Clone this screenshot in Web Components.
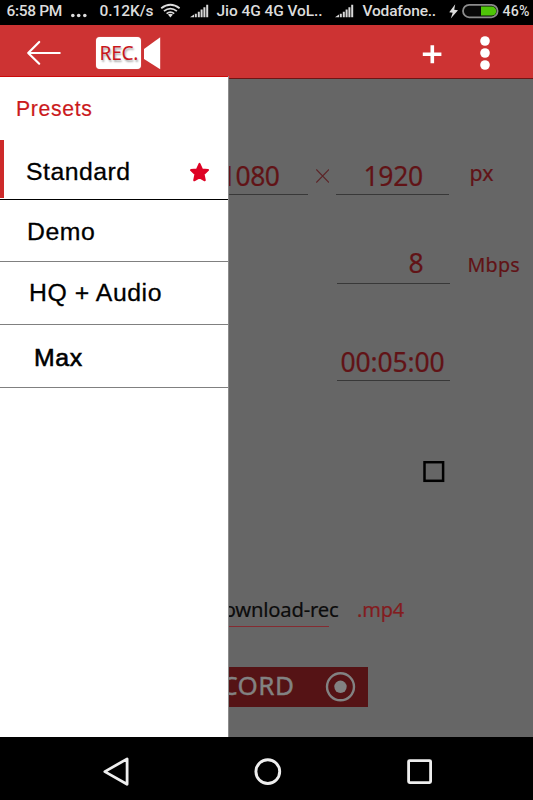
<!DOCTYPE html>
<html lang="en">
<head>
<meta charset="utf-8">
<title>Screen recorder</title>
<style>
  html, body { margin: 0; padding: 0; background: #000; }
</style>
</head>
<body>
<recorder-screen></recorder-screen>
<script>
const define = (name, html, setup) => {
  const template = document.createElement('template');
  template.innerHTML = html;
  customElements.define(name, class extends HTMLElement {
    connectedCallback() {
      if (this.shadowRoot) return;
      this.attachShadow({ mode: 'open' }).append(template.content.cloneNode(true));
      if (setup) setup.call(this, this.shadowRoot);
    }
  });
};

/* Single line of text tracked to an exact advance width. */
define('fit-text', `
  <style>
    :host { display: block; flex: none; white-space: nowrap; }
    span { display: inline-block; vertical-align: top; line-height: inherit; }
  </style><span></span>`, function (root) {
  const span = root.querySelector('span');
  span.textContent = this.getAttribute('text');
  const width = Number(this.getAttribute('w'));
  if (width) {
    this.style.width = width + 'px';
    const n = span.textContent.length;
    span.style.letterSpacing = (width - span.getBoundingClientRect().width) / n + 'px';
  }
});

define('signal-icon', `
  <style>:host { display: block; flex: none; width: 19px; height: 14px; } svg { display: block; }</style>
  <svg width="19" height="14" viewBox="0 0 19 14" fill="#d8d8d8">
    <path d="M0 13.2L4 10.6V13.2ZM4.8 9.8H6.8V13.2H4.8ZM7.8 7.8H9.8V13.2H7.8ZM10.6 5.6H12.6V13.2H10.6ZM13.4 3.2H15.4V13.2H13.4ZM16.2 .8H18.2V13.2H16.2Z"/>
  </svg>`);

define('status-bar', `
  <style>
    :host { display: grid; height: 25px; background: #000; color: #dcdcdc;
      grid-template-columns: 63.5px 29.5px 60.5px 29.5px 27px 118px 28px 86.5px 12.5px 41px 1fr;
      padding-left: 6.5px; box-sizing: border-box;
      font: 500 15.5px/23.5px Roboto, sans-serif; }
    svg { display: block; }
    signal-icon { margin-top: 4px; }
  </style>
  <fit-text text="6:58 PM" w="55.5"></fit-text>
  <svg width="20" height="24"><g fill="#dcdcdc"><circle cx="2.8" cy="15.5" r="1.8"/><circle cx="8.7" cy="15.5" r="1.8"/><circle cx="14.8" cy="15.5" r="1.8"/></g></svg>
  <fit-text text="0.12K/s" w="54"></fit-text>
  <svg width="21" height="24" viewBox="0 0 21 24" fill="none" stroke="#dcdcdc" stroke-width="1.8">
    <path d="M1.2 8.3Q10.4 1.2 19.6 8.3M3.9 11.1Q10.4 6.1 16.9 11.1M6.6 13.6Q10.4 10.6 14.2 13.6"/>
    <path d="M7.9 14.6Q10.4 12.7 12.9 14.6L10.4 17.6Z" fill="#dcdcdc" stroke="none"/>
  </svg>
  <signal-icon></signal-icon>
  <fit-text text="Jio 4G 4G VoL.." w="106"></fit-text>
  <signal-icon></signal-icon>
  <fit-text text="Vodafone.." w="73.5"></fit-text>
  <svg width="10" height="24" viewBox="0 0 10 24" fill="#dcdcdc"><path d="M6.2 4.3L.2 12.2L3.7 12.7L1.8 18.6L9 10.3L5.2 9.7Z"/></svg>
  <svg width="38" height="24" viewBox="0 0 38 24"><rect x="1" y="4.9" width="34.6" height="12.4" rx="6.2" fill="#080808" stroke="#8c8c8c" stroke-width="1.8"/>
    <path d="M19 6.6H29.8A4.5 4.5 0 0 1 29.8 15.6H19Z" fill="#4fc508"/></svg>
  <fit-text text="46%" w="27" style="font-size:14.2px"></fit-text>
`);

define('app-bar', `
  <style>
    :host { display: flex; align-items: flex-start; height: 54px; box-sizing: border-box;
      background: #cd3333; border-bottom: 1px solid #6e1515; padding-left: 26px; }
    svg { display: block; flex: none; }
    .logo { display: flex; gap: 3px; margin: 11.5px 0 0 34px; }
    .tag { width: 44.5px; height: 32.5px; box-sizing: border-box; padding-left: 3.6px; border-radius: 4px; background: #fff;
      color: #c8171c; font: 19.2px/31px "Noto Sans", sans-serif; text-shadow: 1px 2px 2px #0005; box-shadow: 0 0 1px #fff9; }
    .plus { margin: 17px 0 0 261.5px; }
    .more { margin: 9px 0 0 37px; }
  </style>
  <svg width="36" height="52" viewBox="0 0 36 52" fill="none" stroke="#fff" stroke-width="2.2" stroke-linecap="round" stroke-linejoin="round"><path d="M33.7 28H2.2M13.2 17L2.2 28L13.2 38.7"/></svg>
  <div class="logo">
    <div class="tag"><fit-text text="REC." w="38.5"></fit-text></div>
    <svg width="17" height="33" viewBox="0 0 17 33"><path d="M0 12L16.2 .3V32.3L0 22Z" fill="#fff"/></svg>
  </div>
  <svg class="plus" width="20" height="22" viewBox="0 0 20 22"><path d="M.8 12.3H19.4M10.3 3.3V21.2" stroke="#fff" stroke-width="3.6"/></svg>
  <svg class="more" width="12" height="38" fill="#fff"><circle cx="6" cy="7" r="4.8"/><circle cx="6" cy="19" r="4.8"/><circle cx="6" cy="31" r="4.8"/></svg>
`);

define('preset-item', `
  <style>
    :host { display: flex; box-sizing: border-box; color: #000;
      border-bottom: 1px solid #808080; font: 24.8px/30px "Liberation Sans", Arial, sans-serif; -webkit-text-stroke: .3px #000; }
    :host([selected]) { border-bottom-color: #000; background: linear-gradient(#cd2a2a, #cd2a2a) 0 0 / 4px 58px no-repeat; }
    ::slotted(svg) { display: block; flex: none; }
  </style><slot></slot>`);

define('presets-drawer', `
  <style>
    :host { display: block; background: #fff; border-right: 1px solid #8c8c8c; }
    h2 { margin: 0; height: 64px; box-sizing: border-box; padding: 17px 0 0 16px; color: #cb1a1c; border-top: 1px solid #cc0a0a;
      font: 21.2px/29px "Liberation Sans", Arial, sans-serif; -webkit-text-stroke: .2px #cb1a1c; }
  </style>
  <h2><fit-text text="Presets" w="76.5"></fit-text></h2>
  <preset-item selected style="height:60px;padding:17px 0 0 26px">
    <fit-text text="Standard" w="104.5"></fit-text>
    <svg style="margin:5px 0 0 58px" width="21" height="20" viewBox="0 0 21 20"><path d="M10.5 1.9L13 7.4L19 8.1L14.6 12.2L15.8 18.3L10.5 15.3L5.2 18.3L6.4 12.2L2 8.1L8 7.4Z" fill="#de0325" stroke="#de0325" stroke-width="2" stroke-linejoin="round"/></svg>
  </preset-item>
  <preset-item style="height:62px;padding:17px 0 0 27px"><fit-text text="Demo" w="68.5"></fit-text></preset-item>
  <preset-item style="height:63px;padding:16px 0 0 29px"><fit-text text="HQ + Audio" w="133"></fit-text></preset-item>
  <preset-item style="height:63px;padding:18px 0 0 34px;-webkit-text-stroke-width:.6px"><fit-text text="Max" w="49"></fit-text></preset-item>
`);

define('value-field', `
  <style>
    :host { display: flex; flex: none; justify-content: flex-end; height: 35px; box-sizing: border-box;
      border-bottom: 1px solid #383838; font-size: 26.5px; line-height: 32px; }
  </style><slot></slot>`);

define('record-form', `
  <style>
    :host { display: flex; flex-direction: column; height: 100%; box-sizing: border-box; padding: 84px 0 0 195px;
      background: #666; color: #611316; font-family: "Noto Sans", "Open Sans", sans-serif; -webkit-text-stroke: .2px; }
    .row { display: flex; align-items: flex-start; flex: none; height: 89px; }
    .unit { font-size: 19.7px; line-height: 30px; }
    .offset { margin-left: 142px; }
    .check { margin-left: 227.5px; }
    .file { color: #0c0c0c; font-size: 20.2px; line-height: 28px; border-bottom: 1px solid #852b31; width: 133.5px; height: 32px; box-sizing: border-box; display: flex; }
    .record { display: flex; width: 172.7px; height: 39.5px; box-sizing: border-box; background: #551315; color: #828282;
      font-size: 26px; line-height: 36px; -webkit-text-stroke: .4px; }
    svg { display: block; flex: none; }
  </style>
  <div class="row">
    <value-field style="width:113px;padding-right:28.5px"><fit-text text="1080" w="58.5"></fit-text></value-field>
    <svg style="margin:9px 7px 0 8px" width="13" height="14" viewBox="0 0 13 14"><path d="M.3 .5L13 13.5M13 .5L.3 13.5" stroke="#5c2427" stroke-width="1.1"/></svg>
    <value-field style="width:113px;padding-right:26px"><fit-text text="1920" w="59.5"></fit-text></value-field>
    <fit-text class="unit" style="margin:-2px 0 0 20.5px;font-size:21.3px" text="px" w="24"></fit-text>
  </div>
  <div class="row" style="height:97px">
    <value-field class="offset" style="width:113px;padding-right:26.5px;line-height:28px"><fit-text text="8" w="15"></fit-text></value-field>
    <fit-text class="unit" style="margin:1px 0 0 17.5px" text="Mbps" w="52.5"></fit-text>
  </div>
  <div class="row" style="height:114.5px">
    <value-field class="offset" style="width:113px;padding-right:5.5px"><fit-text text="00:05:00" w="104"></fit-text></value-field>
  </div>
  <div class="row" style="height:134px"><svg class="check" width="23" height="23" fill="none" stroke="#000" stroke-width="2.5"><rect x="1.5" y="1.2" width="18.6" height="18.6"/></svg></div>
  <div class="row" style="height:72.5px">
    <div class="file"><fit-text style="margin-left:16.5px" text="download-rec" w="127"></fit-text></div>
    <fit-text class="unit" style="margin:0 0 0 28.5px;color:#831c1f;font-size:20px" text=".mp4" w="47"></fit-text>
  </div>
  <div class="record">
    <fit-text style="margin-left:-5.5px" text="RECORD" w="105"></fit-text>
    <svg style="margin:4px 0 0 30.5px" width="31" height="32" viewBox="0 0 31 32"><circle cx="15.5" cy="15.8" r="13.5" fill="none" stroke="#828282" stroke-width="2.4"/><circle cx="15.5" cy="15.8" r="6.2" fill="#828282"/></svg>
  </div>
`);

define('nav-bar', `
  <style>
    :host { display: flex; height: 63px; background: #000; padding-left: 102px; box-sizing: border-box; }
    svg { display: block; flex: none; margin-top: 19px; }
  </style>
  <svg width="30" height="32" viewBox="0 0 30 32" fill="none" stroke="#eee" stroke-width="2.8" stroke-linejoin="round"><path d="M2.8 15.6L25.1 2.9V28.3Z"/></svg>
  <svg style="margin-left:121px" width="30" height="32" fill="none" stroke="#eee" stroke-width="2.9"><circle cx="14.8" cy="15.6" r="11.9"/></svg>
  <svg style="margin-left:121px" width="30" height="32" fill="none" stroke="#eee" stroke-width="2.8"><rect x="4.6" y="4.6" width="22" height="22" rx="1"/></svg>
`);

/* The drawer lies over the form and over the last pixels of the app bar. */
define('recorder-screen', `
  <style>
    :host { display: grid; grid-template-rows: 25px 51px 661px 63px; width: 533px; height: 800px; overflow: hidden; }
    main { position: relative; min-height: 0; }
    app-bar { position: relative; z-index: 1; }
    presets-drawer { position: absolute; z-index: 2; inset: 0 auto 0 0; width: 228px; }
  </style>
  <status-bar></status-bar>
  <app-bar></app-bar>
  <main><record-form></record-form><presets-drawer></presets-drawer></main>
  <nav-bar></nav-bar>
`);
</script>
</body>
</html>
